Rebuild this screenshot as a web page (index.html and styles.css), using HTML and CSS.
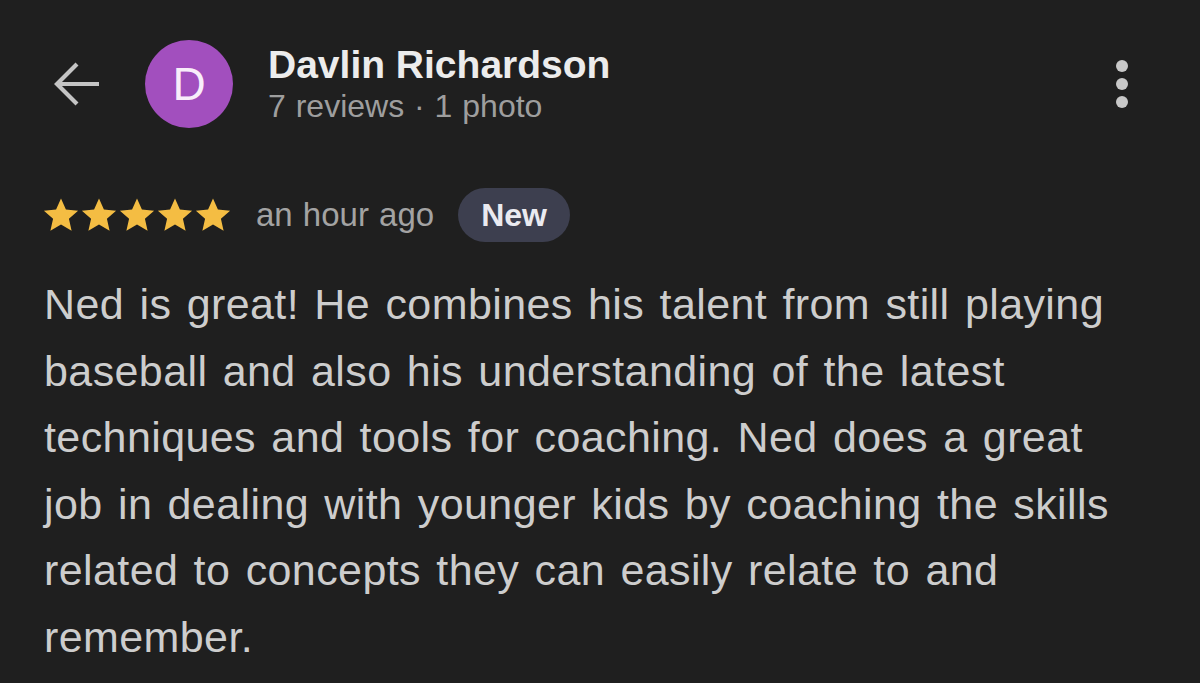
FILE: index.html
```html
<!DOCTYPE html>
<html lang="en">
<head>
<meta charset="utf-8">
<title>Review</title>
<link rel="stylesheet" href="styles.css">
</head>
<body>
<div class="page">
  <header class="header">
    <button class="back" aria-label="Back">
      <svg width="48" height="48" viewBox="0 0 48 48"><path d="M46 24H5M24 4L4 24L24 44" fill="none" stroke="#c4c4c4" stroke-width="4.2" stroke-linecap="butt"/></svg>
    </button>
    <div class="avatar">D</div>
    <div class="who">
      <div class="name">Davlin Richardson</div>
      <div class="meta">7 reviews · 1 photo</div>
    </div>
    <button class="more" aria-label="More">
      <span class="dot"></span><span class="dot"></span><span class="dot"></span>
    </button>
  </header>
  <div class="rating">
    <div class="stars">
      <svg class="star" viewBox="0 0 24 24"><path d="M12 1.5l3.1 7.1 7.7.7-5.8 5.1 1.7 7.6L12 18l-6.7 4 1.7-7.6-5.8-5.1 7.7-.7z"/></svg>
      <svg class="star" viewBox="0 0 24 24"><path d="M12 1.5l3.1 7.1 7.7.7-5.8 5.1 1.7 7.6L12 18l-6.7 4 1.7-7.6-5.8-5.1 7.7-.7z"/></svg>
      <svg class="star" viewBox="0 0 24 24"><path d="M12 1.5l3.1 7.1 7.7.7-5.8 5.1 1.7 7.6L12 18l-6.7 4 1.7-7.6-5.8-5.1 7.7-.7z"/></svg>
      <svg class="star" viewBox="0 0 24 24"><path d="M12 1.5l3.1 7.1 7.7.7-5.8 5.1 1.7 7.6L12 18l-6.7 4 1.7-7.6-5.8-5.1 7.7-.7z"/></svg>
      <svg class="star" viewBox="0 0 24 24"><path d="M12 1.5l3.1 7.1 7.7.7-5.8 5.1 1.7 7.6L12 18l-6.7 4 1.7-7.6-5.8-5.1 7.7-.7z"/></svg>
    </div>
    <span class="when">an hour ago</span>
    <span class="badge">New</span>
  </div>
  <p class="text">Ned is great! He combines his talent from still playing baseball and also his understanding of the latest techniques and tools for coaching. Ned does a great job in dealing with younger kids by coaching the skills related to concepts they can easily relate to and remember.</p>
</div>
</body>
</html>
```

FILE: styles.css
```css
html, body {
  margin: 0;
  padding: 0;
  background: #1f1f1f;
}
body {
  font-family: "Liberation Sans", Arial, sans-serif;
  width: 1200px;
  height: 683px;
  overflow: hidden;
}
.page {
  padding: 40px 0 0 44px;
}
.header {
  display: flex;
  align-items: center;
  height: 88px;
}
.back {
  background: none;
  border: 0;
  padding: 0;
  margin: 0 0 0 9px;
  width: 48px;
  height: 48px;
  display: flex;
}
.avatar {
  margin-left: 44px;
  width: 88px;
  height: 88px;
  border-radius: 50%;
  background: #a24fbe;
  color: #f8eefa;
  font-size: 46px;
  display: flex;
  align-items: center;
  justify-content: center;
  flex: none;
}
.who {
  margin-left: 35px;
  display: flex;
  flex-direction: column;
}
.name {
  color: #ececec;
  font-size: 39px;
  font-weight: bold;
  line-height: 44px;
}
.meta {
  color: #9e9e9e;
  font-size: 32px;
  line-height: 38px;
  word-spacing: 1px;
}
.more {
  margin-left: auto;
  margin-right: 72px;
  background: none;
  border: 0;
  padding: 0;
  display: flex;
  flex-direction: column;
  gap: 6px;
  align-items: center;
}
.dot {
  width: 12px;
  height: 12px;
  border-radius: 50%;
  background: #c8c8c8;
}
.rating {
  display: flex;
  align-items: center;
  margin-top: 60px;
  height: 54px;
}
.stars {
  display: flex;
  margin-left: -2px;
}
.star {
  width: 38px;
  height: 38px;
  fill: #f4bd43;
}
.when {
  margin-left: 24px;
  color: #a3a3a3;
  font-size: 33px;
  word-spacing: 1px;
}
.badge {
  margin-left: 24px;
  height: 54px;
  padding: 0 23px;
  border-radius: 27px;
  background: #3d3f4f;
  color: #eaeaf0;
  font-size: 32px;
  font-weight: bold;
  display: flex;
  align-items: center;
}
.text {
  margin: 29px 0 0;
  width: 1090px;
  color: #cdcdcd;
  font-size: 43px;
  line-height: 66.6px;
  letter-spacing: 0.4px;
  word-spacing: 3px;
}
```
